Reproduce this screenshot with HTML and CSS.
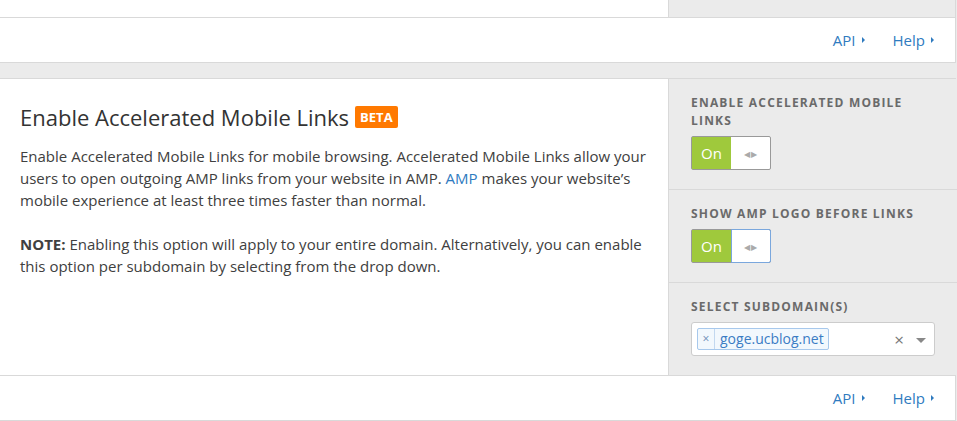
FILE: index.html
```html
<!DOCTYPE html>
<html lang="en">
<head>
    <meta charset="UTF-8">
    <title>Enable Accelerated Mobile Links</title>
    <link rel="stylesheet" href="styles.css">
</head>
<body>
    <div class="page">
        <!-- previous card, only its bottom is visible -->
        <div class="card card-cut">
            <div class="card-body">
                <div class="card-main"></div>
                <div class="card-side"></div>
            </div>
            <div class="card-footer">
                <a href="#" class="foot-link">API <span class="caret"></span></a>
                <a href="#" class="foot-link">Help <span class="caret"></span></a>
            </div>
        </div>

        <div class="card">
            <div class="card-body">
                <div class="card-main">
                    <h2 class="card-title">Enable Accelerated Mobile Links <span class="badge">BETA</span></h2>
                    <p>Enable Accelerated Mobile Links for mobile browsing. Accelerated Mobile Links allow your users to open outgoing AMP links from your website in AMP. <a href="#">AMP</a> makes your website’s mobile experience at least three times faster than normal.</p>
                    <p><strong>NOTE:</strong> Enabling this option will apply to your entire domain. Alternatively, you can enable this option per subdomain by selecting from the drop down.</p>
                </div>
                <div class="card-side">
                    <div class="side-row">
                        <div class="side-label">Enable Accelerated Mobile Links</div>
                        <div class="toggle">
                            <span class="toggle-on">On</span>
                            <span class="toggle-knob">&#9664;&#9654;</span>
                        </div>
                    </div>
                    <div class="side-row">
                        <div class="side-label">Show AMP logo before links</div>
                        <div class="toggle focused">
                            <span class="toggle-on">On</span>
                            <span class="toggle-knob">&#9664;&#9654;</span>
                        </div>
                    </div>
                    <div class="side-row last">
                        <div class="side-label">Select subdomain(s)</div>
                        <div class="select">
                            <span class="tag"><span class="tag-x">&times;</span><span class="tag-text">goge.ucblog.net</span></span>
                            <span class="select-clear">&times;</span>
                            <span class="select-arrow"></span>
                        </div>
                    </div>
                </div>
            </div>
            <div class="card-footer">
                <a href="#" class="foot-link">API <span class="caret"></span></a>
                <a href="#" class="foot-link">Help <span class="caret"></span></a>
            </div>
        </div>
    </div>
</body>
</html>
```

FILE: styles.css
```css
body {
    margin: 0;
    background-color: #ebebeb;
    font-family: "Open Sans", Arial, sans-serif;
    color: #404040;
}
.page {
    width: 956px;
}
.card {
    background: #fff;
    border-top: 1px solid #d9d9d9;
    border-bottom: 1px solid #d9d9d9;
    border-right: 1px solid #d9d9d9;
    margin-bottom: 15px;
}
.card-cut {
    border-top: none;
}
.card-body {
    display: flex;
    border-bottom: 1px solid #d9d9d9;
}
.card-cut .card-body {
    height: 17px;
}
.card-main {
    flex: none;
    width: 668px;
    padding: 20px;
    box-sizing: border-box;
}
.card-cut .card-main {
    padding: 0;
}
.card-side {
    flex: 1;
    background: #ebebeb;
    border-left: 1px solid #d9d9d9;
}
.card-title {
    margin: 2px 0 12px;
    font-size: 22px;
    font-weight: 400;
    line-height: 32px;
    color: #333;
    display: flex;
    align-items: center;
}
.badge {
    background: #ff7900;
    color: #fff;
    font-size: 13px;
    font-weight: 700;
    line-height: 22px;
    padding: 0 5px;
    border-radius: 2px;
    margin-left: 6px;
}
.card-main p {
    margin: 0 0 22px;
    font-size: 15px;
    line-height: 22px;
}
.card-main a {
    color: #2f7bbf;
    text-decoration: none;
}
.card-main strong {
    font-weight: 700;
}
.side-row {
    padding: 15px 22px 19px;
    border-bottom: 1px solid #d9d9d9;
}
.side-row.last {
    border-bottom: none;
}
.side-label {
    font-size: 12px;
    font-weight: 700;
    line-height: 18px;
    letter-spacing: 1.2px;
    text-transform: uppercase;
    color: #6a6a6a;
    margin-bottom: 6px;
}
.toggle {
    display: flex;
    width: 80px;
    height: 34px;
    box-sizing: border-box;
    border: 1px solid #999;
    border-radius: 2px;
    background: #fff;
}
.toggle-on {
    width: 39px;
    background: #9fc93c;
    color: #fff;
    font-size: 15px;
    display: flex;
    align-items: center;
    justify-content: center;
}
.toggle-knob {
    flex: 1;
    display: flex;
    align-items: center;
    justify-content: center;
    font-size: 8px;
    letter-spacing: 1px;
    color: #aaa;
}
.toggle.focused .toggle-knob {
    border: 1px solid #7aa7dd;
    margin: -1px -1px -1px 0;
    border-radius: 0 2px 2px 0;
}
.select {
    display: flex;
    align-items: center;
    width: 244px;
    height: 34px;
    box-sizing: border-box;
    border: 1px solid #ccc;
    border-radius: 3px;
    background: #fff;
    padding: 0 8px 0 5px;
}
.tag {
    display: flex;
    height: 22px;
    box-sizing: border-box;
    border: 1px solid #a7c8ec;
    border-radius: 2px;
    background: #f2f8fd;
    color: #3a7cc4;
}
.tag-x {
    width: 16px;
    border-right: 1px solid #c2d8f0;
    font-size: 12px;
    line-height: 20px;
    text-align: center;
    color: #6a8db5;
}
.tag-text {
    font-size: 14px;
    line-height: 20px;
    padding: 0 4px 0 5px;
}
.select-clear {
    margin-left: auto;
    font-size: 17px;
    color: #777;
    line-height: 1;
}
.select-arrow {
    width: 0;
    height: 0;
    border-left: 5px solid transparent;
    border-right: 5px solid transparent;
    border-top: 5px solid #888;
    margin: 2px 0 0 12px;
}
.card-footer {
    display: flex;
    justify-content: flex-end;
    align-items: center;
    height: 44px;
    padding-right: 21px;
    gap: 28px;
}
.foot-link {
    color: #2f7bbf;
    text-decoration: none;
    font-size: 15px;
    display: flex;
    align-items: center;
}
.caret {
    width: 0;
    height: 0;
    border-top: 3px solid transparent;
    border-bottom: 3px solid transparent;
    border-left: 3px solid #2f7bbf;
    margin-left: 6px;
}
```
